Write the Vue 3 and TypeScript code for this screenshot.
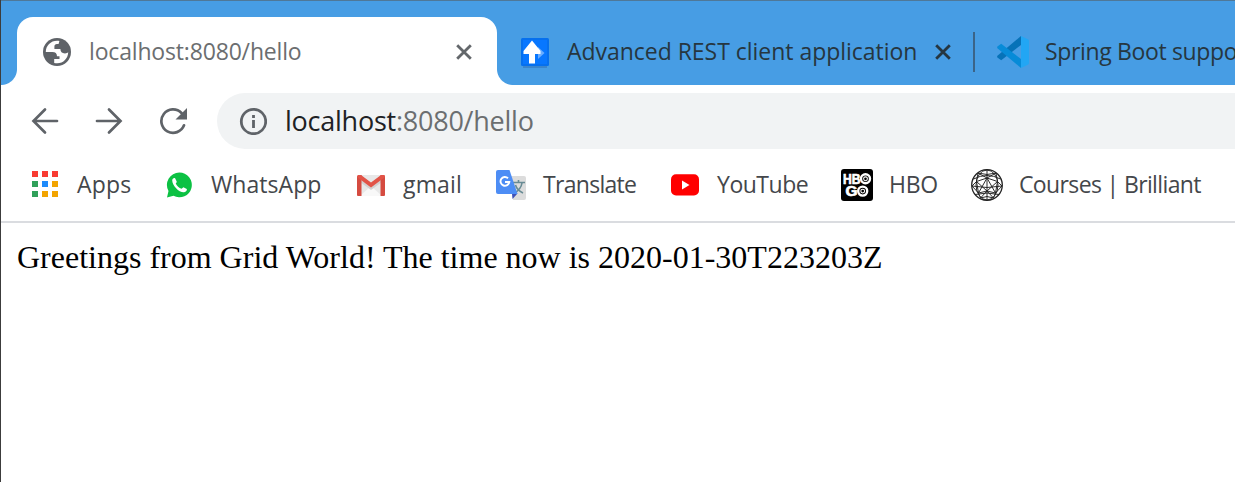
<script setup lang="ts">
interface Bookmark {
  id: string
  label: string
}

const bookmarks: Bookmark[] = [
  { id: 'apps', label: 'Apps' },
  { id: 'whatsapp', label: 'WhatsApp' },
  { id: 'gmail', label: 'gmail' },
  { id: 'translate', label: 'Translate' },
  { id: 'youtube', label: 'YouTube' },
  { id: 'hbo', label: 'HBO' },
  { id: 'courses', label: 'Courses | Brilliant' },
]

const appColors: string[] = [
  '#f83b32', '#f83b32', '#f83b32',
  '#31a05a', '#1f8bfb', '#f2a400',
  '#31a05a', '#f2a400', '#f2a400',
]
</script>

<template>
  <div class="window">
    <header class="tabs">
      <div class="curve-left"></div>
      <div class="tab active">
        <svg class="globe" viewBox="0 0 28 28">
          <circle cx="14" cy="14" r="14" fill="#5f6368" />
          <path d="M16.400 3C9 1.600 2.800 7 2.800 14h6.600c3 0 4.600 1.500 4.600 4.300h2.500v2.800h-5.300v3.800C18.600 27 25.200 21.200 25.200 14c-.7 1-1.700 1.400-3.200 1.400-3.200 0-4.600-1.600-4.600-4.300h-6V8.400c0-1.500.9-2.400 2.500-2.400h1.700z" fill="#fff" />
        </svg>
        <span class="title t-local">localhost:8080/hello</span>
        <svg class="close" viewBox="0 0 16 16"><path d="M1.200 1.200 14.800 14.800M14.800 1.200 1.200 14.800" /></svg>
      </div>
      <div class="tab rest">
        <svg class="fav-rest" viewBox="0 0 28 30">
          <path d="M2 28h24v2H2z" fill="#3b86cc" />
          <rect width="28" height="28" rx="1.500" fill="#0670ee" />
          <rect x="2" y="2" width="24" height="24" fill="#0877ff" />
          <path d="M17 9v12l6.500-6z" fill="#69adff" />
          <path d="M11 2.500 2.500 13v3H8v9.500h6V16h5.500v-3z" fill="#fff" />
        </svg>
        <span class="title t-rest">Advanced REST client application</span>
        <svg class="close dark" viewBox="0 0 16 16"><path d="M1.200 1.200 14.800 14.800M14.800 1.200 1.200 14.800" /></svg>
      </div>
      <div class="divider"></div>
      <div class="tab spring">
        <svg class="fav-code" viewBox="0 0 32 32">
          <path d="M24 0v9L4.200 24.300.7 21.800c-.8-.6-.8-1.500 0-2.200z" fill="#0672b8" />
          <path d="M24 32v-9L4.200 7.700.7 10.200c-.8.600-.8 1.500 0 2.200z" fill="#078bd8" />
          <path d="M24 0 30.800 3.200Q32 3.800 32 5v22q0 1.200-1.200 1.800L24 32z" fill="#22a6f4" />
        </svg>
        <span class="title t-spring">Spring Boot support</span>
      </div>
    </header>

    <nav class="toolbar">
      <svg class="nav" viewBox="0 0 28 28"><path d="M26 14H3M14 2.500 2.500 14 14 25.500" /></svg>
      <svg class="nav" viewBox="0 0 28 28"><path d="M2 14H25M14 2.500 25.500 14 14 25.500" /></svg>
      <svg class="nav" viewBox="0 0 28 28">
        <path d="M25 18.300A11.700 11.700 0 1 1 22.500 6" />
        <path class="solid" d="M28 1v11.500H16.500z" />
      </svg>
      <div class="omnibox">
        <svg class="info" viewBox="0 0 28 28">
          <circle cx="14.500" cy="14.500" r="12.200" />
          <path d="M14.500 13V21M14.500 8v3" />
        </svg>
        <span class="url"><b>localhost</b>:8080/hello</span>
      </div>
    </nav>

    <nav class="bookmarks">
      <div v-for="b in bookmarks" :key="b.id" class="bookmark">
        <svg class="icon" viewBox="0 0 32 32">
          <g v-if="b.id === 'apps'">
            <rect v-for="(c, i) in appColors" :key="i" :x="3 + (i % 3) * 10" :y="2 + Math.floor(i / 3) * 10" width="6" height="6" :fill="c" />
          </g>
          <g v-else-if="b.id === 'whatsapp'">
            <path d="M16.300 3.500A12.400 12.400 0 0 0 5.500 22L4 28.500l6.500-1.700A12.400 12.400 0 1 0 16.300 3.500z" fill="#0cc143" />
            <path d="M9.200 11.500c0-2 1.800-3 2.900-2.300l1.600 3.300c.3.700-.8 1.700-1 2.100 1.300 2.700 3.200 4.300 5.900 5.200l1.800-1.600 3.400 1.700c.5 1.200-.8 3-2.700 3.300-4.900.5-11.700-6.200-11.900-11.700z" fill="#fff" />
          </g>
          <g v-else-if="b.id === 'gmail'">
            <path d="M3 6h26v21H3z" fill="#e8e8e8" />
            <path d="M5 27 16 17l11 10z" fill="#f8f8f8" />
            <path d="m5 9 11 9L27 9v4L16 21 5 13z" fill="#d3d0d0" />
            <path d="M2 8q0-2 2-2h2.500v21H3q-1 0-1-1zM30 8q0-2-2-2h-2.500v21H29q1 0 1-1z" fill="#d54b40" />
            <path d="M3 6h3l10 7.500L26 6h3q1 0 1 2L16 18.500 2 8z" fill="#e25347" />
          </g>
          <g v-else-if="b.id === 'translate'">
            <path d="M14 7h15q2 0 2 2v20q0 2-2 2H18z" fill="#dcdcdc" />
            <path d="M18 13.500h12M23.500 11v2.500M27 14c-.7 4.500-3.500 7.500-7 10M20.500 16c1 3.500 4.500 6.500 7.500 8" stroke="#688b94" stroke-width="1.600" fill="none" />
            <path d="M17 24.500h5.500L17.500 30z" fill="#3e51b8" />
            <path d="M3 1h11.500l8 24H3q-2 0-2-2V3q0-2 2-2z" fill="#4d8df5" />
            <path d="M13 9.200A4.400 4.400 0 1 0 14.300 13H10" stroke="#fff" stroke-width="1.900" fill="none" />
          </g>
          <g v-else-if="b.id === 'youtube'">
            <rect x="2" y="5.300" width="28" height="21.200" rx="5" fill="#f00" />
            <path d="m13 11.500 7.500 4.500-7.500 4.500z" fill="#fff" />
          </g>
          <g v-else-if="b.id === 'hbo'">
            <rect width="32" height="32" rx="3" />
            <text class="hbo-text" x="2" y="15" textLength="17.500" lengthAdjust="spacingAndGlyphs">HB</text>
            <text class="hbo-text" x="4.500" y="27.300" textLength="12" lengthAdjust="spacingAndGlyphs">G</text>
            <g fill="none" stroke="#fff">
              <circle cx="24.500" cy="9.800" r="4.500" stroke-width="2.400" /><circle cx="24.500" cy="9.800" r="1.900" stroke-width="1.100" />
              <circle cx="21.700" cy="22.100" r="4.500" stroke-width="2.400" /><circle cx="21.700" cy="22.100" r="1.900" stroke-width="1.100" />
            </g>
          </g>
          <g v-else fill="none" stroke="#222" stroke-width="0.950">
            <circle cx="16" cy="16" r="15.300" stroke-width="1.300" />
            <ellipse cx="16" cy="16" rx="11" ry="15" />
            <path d="M16 9 5.500 12.500 7.500 24 16 22l8.500 2L26.500 12.500zM16 9v13M5.500 12.500 16 22l10.500-9.500M16 9 7.500 24M16 9l8.500 15M1 17q15 3 30 0M16 22v9M7.500 24 1 17l4.500-4.500L7 4M24.500 24 31 17l-4.500-4.500L25 4M7 4l9 5 9-5M7 4q9 3 18 0M2.500 10q13.500-7 27 0M16 1v8M7.500 24l2 5L16 22l6.500 7 2-5M4 25.500q12-3 24 0M9.500 29q6.500-3 13 0" />
          </g>
        </svg>
        <span class="label" :class="'l-' + b.id">{{ b.label }}</span>
      </div>
    </nav>

    <main class="page">Greetings from Grid World! The time now is 2020-01-30T223203Z</main>
  </div>
</template>

<style>
body {
  overflow: hidden;
}
</style>

<style scoped>
.window {
  box-sizing: border-box;
  width: 1235px;
  height: 482px;
  overflow: hidden;
  border-left: 1px solid #3c3c3c;
  background: #fff;
  font-family: "Open Sans", "Noto Sans", sans-serif;
  font-size: 23px;
  white-space: nowrap;
}
svg {
  flex: none;
  display: block;
}
.tabs {
  box-sizing: border-box;
  display: flex;
  height: 85px;
  padding-top: 17px;
  border-top: 1px solid #4f7898;
  background: #479de4;
}
.curve-left {
  flex: none;
  width: 16px;
  background: radial-gradient(circle at 0 0, transparent 15.500px, #fff 16.500px) bottom / 16px 16px no-repeat;
}
.tab {
  flex: none;
  display: flex;
  align-items: center;
  box-sizing: border-box;
  height: 67px;
  color: #263640;
}
.active {
  width: 480px;
  height: 69px;
  padding-left: 26px;
  margin-top: -1px;
  border-radius: 16px 16px 0 0;
  background: #fff;
  color: #6b6e70;
}
.rest {
  width: 476px;
  padding-left: 24px;
  background: radial-gradient(circle at 100% 0, transparent 15.500px, #fff 16.500px) left bottom / 16px 16px no-repeat;
}
.globe {
  width: 28px;
  height: 28px;
}
.title {
  flex: none;
  padding-bottom: 2px;
  line-height: 32px;
}
.t-local {
  width: 351px;
  margin-left: 18px;
  letter-spacing: -0.170px;
}
.t-rest {
  width: 354px;
  margin-left: 18px;
  letter-spacing: -0.030px;
}
.t-spring {
  margin-left: 16px;
  letter-spacing: -0.350px;
}
.close {
  width: 16px;
  height: 16px;
  margin-left: 16px;
  fill: none;
  stroke: #63676b;
  stroke-width: 2.800;
}
.dark {
  margin-left: 14px;
  stroke: #263640;
}
.fav-rest {
  width: 28px;
  height: 30px;
  margin-top: 2px;
}
.divider {
  flex: none;
  width: 2px;
  height: 40px;
  margin-top: 14px;
  background: #3b6488;
}
.spring {
  padding-left: 22px;
}
.fav-code {
  width: 32px;
  height: 32px;
}
.toolbar {
  display: flex;
  align-items: center;
  height: 72px;
  padding-left: 30px;
}
.nav {
  width: 28px;
  height: 28px;
  margin-right: 36px;
  fill: none;
  stroke: #5f6368;
  stroke-width: 2.700;
  stroke-linecap: round;
}
.nav:nth-of-type(3) {
  margin-right: 30px;
}
.solid {
  fill: #5f6368;
  stroke: none;
}
.omnibox {
  flex: 1;
  display: flex;
  align-items: center;
  height: 56px;
  padding-left: 22px;
  border-radius: 28px 0 0 28px;
  background: #f1f3f4;
}
.info {
  width: 28px;
  height: 28px;
  fill: none;
  stroke: #5f6368;
  stroke-width: 2.800;
}
.url {
  margin-left: 18px;
  padding-bottom: 2px;
  color: #6b6e70;
  font-size: 27px;
  letter-spacing: -0.240px;
}
.url b {
  color: #202124;
  font-weight: 400;
}
.bookmarks {
  display: grid;
  grid-template-columns: 134px 192px 140px 174px 172px 130px auto;
  align-items: center;
  box-sizing: border-box;
  height: 66px;
  padding: 0 0 9px 28px;
  border-bottom: 2px solid #dadce0;
}
.bookmark {
  display: flex;
  align-items: center;
}
.icon {
  width: 32px;
  height: 32px;
}
.label {
  margin: -2px 0 0 16px;
  line-height: 32px;
  color: #44474b;
  letter-spacing: -0.300px;
}
.l-apps {
  letter-spacing: 0.200px;
}
.l-whatsapp {
  letter-spacing: 0.060px;
}
.l-gmail {
  letter-spacing: 0.150px;
}
.l-translate {
  letter-spacing: -0.700px;
}
.l-youtube {
  letter-spacing: -0.480px;
}
.l-courses {
  letter-spacing: -0.630px;
}
.hbo-text {
  fill: #fff;
  stroke: #fff;
  stroke-width: 0.700;
  font: 900 14px "Liberation Sans", Arial, sans-serif;
}
.page {
  padding: 16px;
  color: #000;
  font-family: "Liberation Serif", "Times New Roman", serif;
  font-size: 32px;
  line-height: 36px;
}
</style>
